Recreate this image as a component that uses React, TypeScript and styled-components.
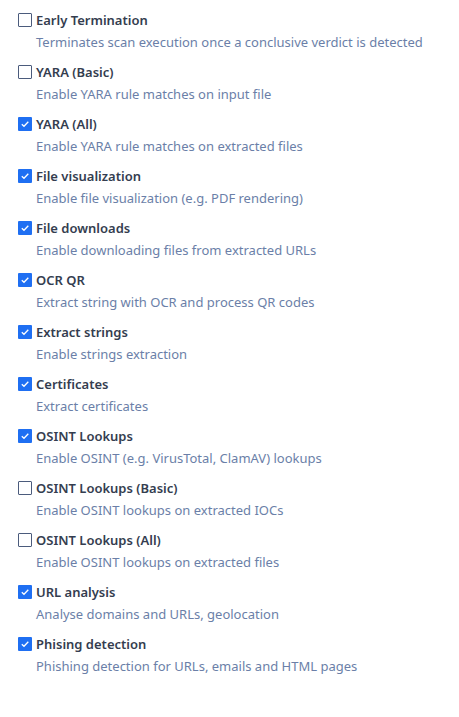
import React from "react";
import styled, { createGlobalStyle } from "styled-components";

const Global = createGlobalStyle`
  html, body { margin: 0; padding: 0; background: #fff; }
  body { font-family: "Noto Sans", "Open Sans", sans-serif; }
`;

const List = styled.div`
  display: flex;
  flex-direction: column;
  padding: 10px 18px 0 18px;
`;

const Item = styled.label`
  display: grid;
  grid-template-columns: 13px 1fr;
  column-gap: 5px;
  row-gap: 2px;
  height: 52px;
  align-content: start;
  cursor: pointer;
`;

const Box = styled.span<{ $checked: boolean }>`
  box-sizing: border-box;
  width: 14px;
  height: 14px;
  margin-top: 3px;
  border: ${(p) => (p.$checked ? "none" : "1.5px solid #4b5b7c")};
  background: ${(p) => (p.$checked ? "#1f6ff2" : "#fff")};
  border-radius: 1px;
  display: flex;
  align-items: center;
  justify-content: center;
`;

const Label = styled.span`
  font-size: 13px;
  font-weight: 600;
  color: #343d4f;
  line-height: 20px;
`;

const Desc = styled.span`
  grid-column: 2;
  font-size: 13px;
  color: #6b7fa8;
  line-height: 20px;
`;

const items: [string, string, boolean][] = [
  ["Early Termination", "Terminates scan execution once a conclusive verdict is detected", false],
  ["YARA (Basic)", "Enable YARA rule matches on input file", false],
  ["YARA (All)", "Enable YARA rule matches on extracted files", true],
  ["File visualization", "Enable file visualization (e.g. PDF rendering)", true],
  ["File downloads", "Enable downloading files from extracted URLs", true],
  ["OCR QR", "Extract string with OCR and process QR codes", true],
  ["Extract strings", "Enable strings extraction", true],
  ["Certificates", "Extract certificates", true],
  ["OSINT Lookups", "Enable OSINT (e.g. VirusTotal, ClamAV) lookups", true],
  ["OSINT Lookups (Basic)", "Enable OSINT lookups on extracted IOCs", false],
  ["OSINT Lookups (All)", "Enable OSINT lookups on extracted files", false],
  ["URL analysis", "Analyse domains and URLs, geolocation", true],
  ["Phising detection", "Phishing detection for URLs, emails and HTML pages", true],
];

export default function App() {
  return (
    <>
      <Global />
      <List>
        {items.map(([l, d, c]) => (
          <Item key={l}>
            <Box $checked={c}>
              {c && (
                <svg width="10" height="10" viewBox="0 0 10 10">
                  <path d="M1.8 5.2 L4 7.3 L8.3 2.8" fill="none" stroke="#fff" strokeWidth="1.3" />
                </svg>
              )}
            </Box>
            <Label>{l}</Label>
            <Desc>{d}</Desc>
          </Item>
        ))}
      </List>
    </>
  );
}
